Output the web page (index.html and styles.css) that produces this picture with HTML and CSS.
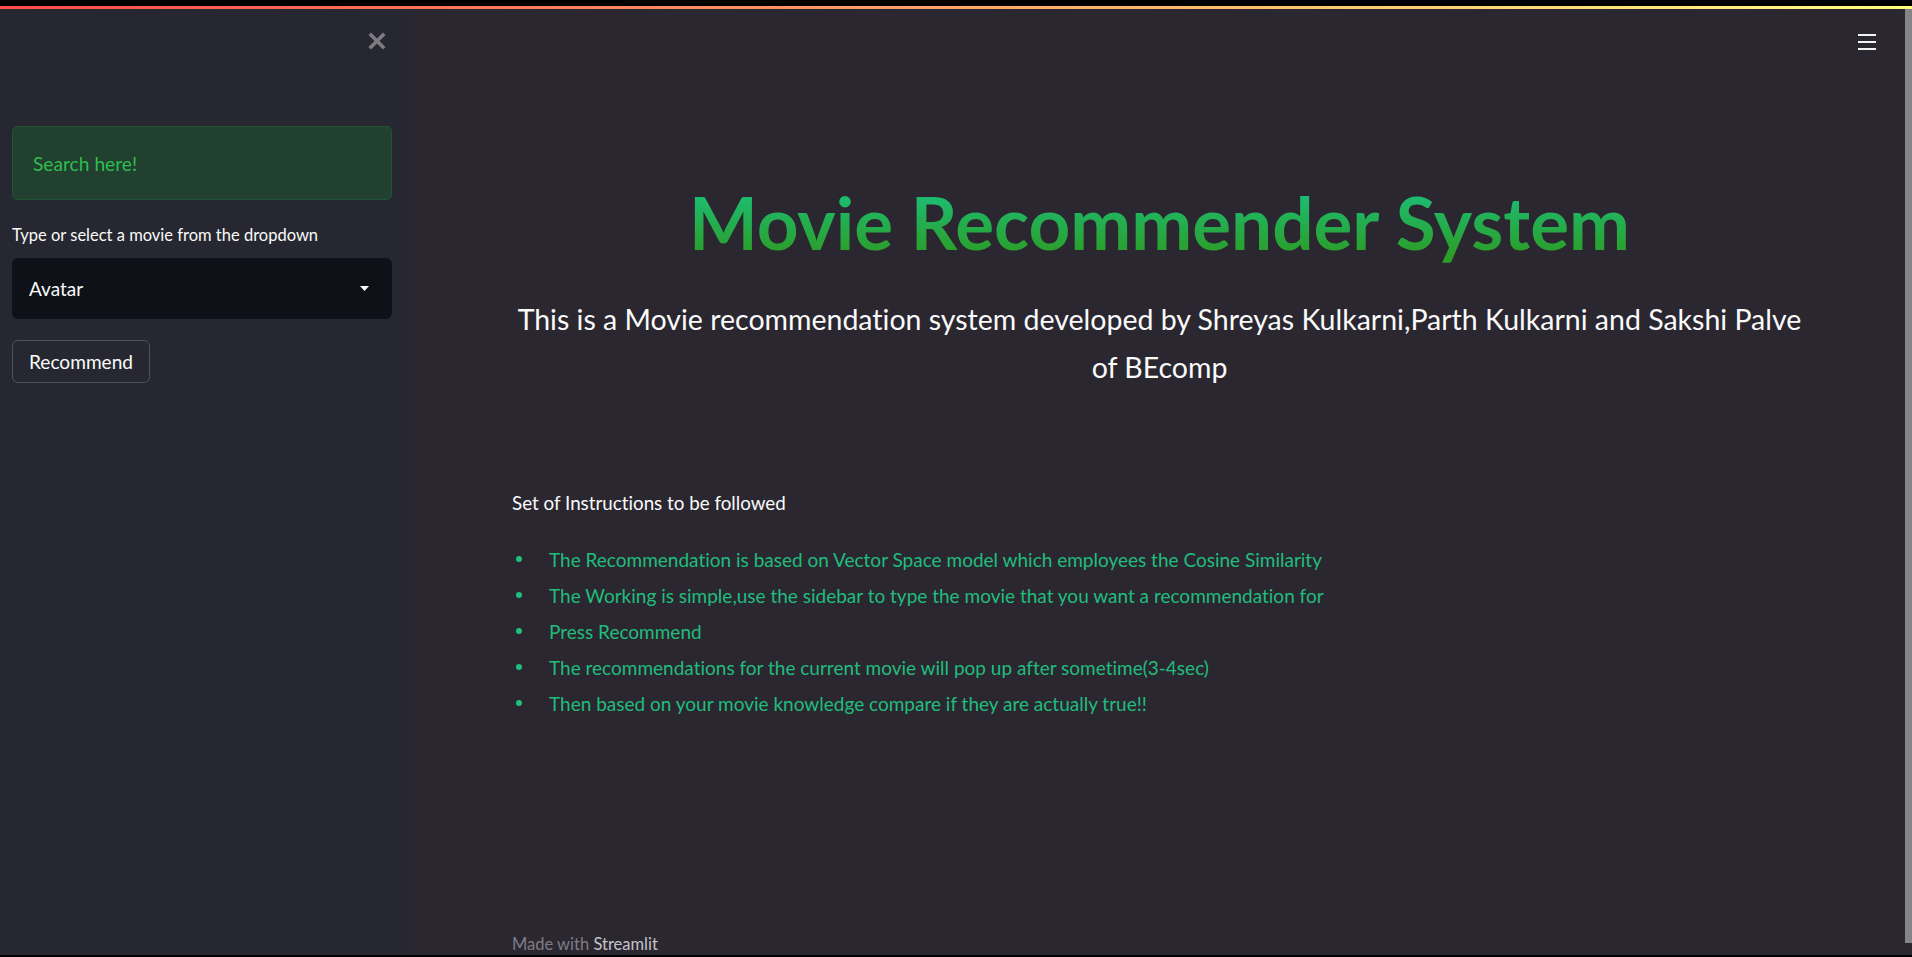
FILE: index.html
```html
<!DOCTYPE html>
<html lang="en">
<head>
<meta charset="utf-8">
<title>Movie Recommender System</title>
<link rel="stylesheet" href="styles.css">
</head>
<body>
<div class="chrome-top"></div>
<div class="decoration"></div>
<div class="app">
  <aside class="sidebar">
    <div class="sidebar-head">
      <svg class="close" width="18" height="18" viewBox="0 0 18 18"><path d="M3 3 L15 15 M15 3 L3 15" stroke="#7c7c82" stroke-width="3.6" stroke-linecap="square"/></svg>
    </div>
    <div class="alert">Search here!</div>
    <label class="label">Type or select a movie from the dropdown</label>
    <div class="select"><span>Avatar</span><svg width="9" height="5" viewBox="0 0 9 5"><path d="M0 0 H9 L4.5 5 Z" fill="#fafafa"/></svg></div>
    <button class="btn">Recommend</button>
  </aside>
  <main class="main">
    <header class="main-head">
      <svg width="18" height="16" viewBox="0 0 18 16"><rect x="0" y="0" width="18" height="2" fill="#f2f2f2"/><rect x="0" y="7" width="18" height="2" fill="#f2f2f2"/><rect x="0" y="14" width="18" height="2" fill="#f2f2f2"/></svg>
    </header>
    <div class="block">
      <h1 class="title">Movie Recommender System</h1>
      <p class="subtitle">This is a Movie recommendation system developed by Shreyas Kulkarni,Parth Kulkarni and Sakshi Palve of BEcomp</p>
      <p class="instr-head">Set of Instructions to be followed</p>
      <ul class="instr">
        <li>The Recommendation is based on Vector Space model which employees the Cosine Similarity</li>
        <li>The Working is simple,use the sidebar to type the movie that you want a recommendation for</li>
        <li>Press Recommend</li>
        <li>The recommendations for the current movie will pop up after sometime(3-4sec)</li>
        <li>Then based on your movie knowledge compare if they are actually true!!</li>
      </ul>
    </div>
    <footer class="footer">Made with <span>Streamlit</span></footer>
  </main>
  <div class="scrollbar"><div class="thumb"></div></div>
</div>
<div class="chrome-bottom"></div>
</body>
</html>
```
FILE: styles.css
```css
* { box-sizing: border-box; margin: 0; padding: 0; }
html, body { height: 100%; }
body {
  background: #000;
  font-family: Lato, "Open Sans", sans-serif;
  font-variant-ligatures: no-common-ligatures;
  height: 957px;
  overflow: hidden;
  display: flex;
  flex-direction: column;
}
.chrome-top { height: 6px; flex: none; background: #000; }
.decoration { height: 3px; flex: none; background: linear-gradient(90deg, #ff4b4b, #fffd80); }
.chrome-bottom { height: 2px; flex: none; background: #000; }
.app { flex: 1; display: flex; min-height: 0; }

.sidebar {
  width: 412px; flex: none; background: #262730;
  padding: 23px 20px 0 12px;
  display: flex; flex-direction: column; align-items: flex-start;
}
.sidebar-head { align-self: stretch; display: flex; justify-content: flex-end; height: 18px; margin-bottom: 76px; }
.close { margin-right: 6px; }
.alert {
  width: 380px; height: 74px;
  background: #21402f; border: 1px solid #1f5532; border-radius: 5px;
  color: #2ebd4f; font-size: 19.2px; padding-left: 20px;
  display: flex; align-items: center;
}
.label { display: block; margin-top: 26px; color: #fafafa; font-size: 16.5px; line-height: 1.2; }
.select {
  margin-top: 12px; width: 380px; height: 61px;
  background: #0e1117; border-radius: 6px;
  padding: 0 23px 0 17px;
  display: flex; align-items: center; justify-content: space-between;
  color: #fafafa; font-size: 19px;
}
.btn {
  margin-top: 21px; height: 43px; padding: 0 16px;
  background: #262730; border: 1px solid #505158; border-radius: 6px;
  color: #fafafa; font-family: inherit; font-size: 19.1px;
  font-variant-ligatures: no-common-ligatures;
}

.main {
  flex: 1; min-width: 0; background: #2b2730;
  display: flex; flex-direction: column; overflow: hidden;
}
.main-head { height: 60px; flex: none; display: flex; justify-content: flex-end; padding: 25px 29px 0 0; }
.block { padding: 0 98px 0 100px; }
.title {
  margin-top: 110px; text-align: center;
  font-size: 72.8px; font-weight: 700; line-height: 1.2;
  background: linear-gradient(180deg, #1ebb6e 22%, #2b9e2a 85%);
  -webkit-background-clip: text; background-clip: text; color: transparent;
}
.subtitle { margin-top: 29px; text-align: center; color: #fafafa; font-size: 28.5px; line-height: 48px; }
.instr-head { margin-top: 97px; color: #fafafa; font-size: 18.8px; line-height: 30px; }
.instr { margin-top: 23px; list-style: none; color: #20bd7c; font-size: 19px; }
.instr li { display: flex; align-items: center; height: 36px; }
.instr li::before {
  content: ""; width: 6px; height: 6px; border-radius: 50%;
  background: #20bd7c; margin: 0 27px 0 4px; flex: none;
}
.footer {
  margin-top: auto; height: 21px; flex: none; padding-left: 100px;
  font-size: 16.5px; line-height: 20px; color: #7e7d86;
}
.footer span { color: #c4c3c9; }

.scrollbar { width: 7px; flex: none; background: #2b2730; }
.thumb { height: 934px; background: #858488; }
```
